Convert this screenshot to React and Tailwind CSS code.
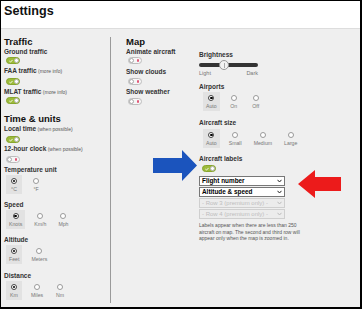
// Settings panel with annotation arrows
function Label({ children, note, className = "" }) {
  return (
    <div className={`h-[10px] leading-[10px] text-[6.5px] font-bold text-[#333] whitespace-nowrap ${className}`}>
      {children}
      {note && <span className="font-normal text-[5px] text-[#555]"> ({note})</span>}
    </div>
  );
}

function Heading({ children, className = "" }) {
  return (
    <div className={`h-[10px] leading-[10px] text-[9.5px] font-bold text-[#111] whitespace-nowrap ${className}`}>
      {children}
    </div>
  );
}

function Toggle({ on, className = "" }) {
  if (on) {
    return (
      <div className={`w-[14px] h-[7px] rounded-full bg-[#9dbb3a] border border-[#87a52e] flex items-center justify-between pl-[1.5px] ${className}`}>
        <svg width="4" height="4" viewBox="0 0 4 4">
          <path d="M0.4 2.1 L1.5 3.1 L3.6 0.9" stroke="#fff" strokeWidth="0.9" fill="none" />
        </svg>
        <div className="w-[5px] h-[5px] rounded-full bg-white border border-[#b5b5b5]" />
      </div>
    );
  }
  return (
    <div className={`w-[14px] h-[7px] rounded-full bg-[#f6f6f6] border border-[#bdbdbd] flex items-center justify-between pr-[2px] ${className}`}>
      <div className="w-[5px] h-[5px] rounded-full bg-white border border-[#a8a8a8]" />
      <div className="w-[2.5px] h-[2.5px] rounded-full bg-[#e05a78]" />
    </div>
  );
}

function RadioGroup({ options, selected = 0, className = "" }) {
  return (
    <div className={`flex gap-[6px] ${className}`}>
      {options.map((o, i) => (
        <div
          key={o}
          className={`h-[19px] min-w-[16px] px-[3px] pt-[3px] flex flex-col items-center ${i === selected ? "bg-[#e2e2e2]" : ""}`}
        >
          <div
            className={`w-[6px] h-[6px] rounded-full bg-white border flex items-center justify-center ${i === selected ? "border-[#444]" : "border-[#999]"}`}
          >
            {i === selected && <div className="w-[2.5px] h-[2.5px] rounded-full bg-black" />}
          </div>
          <div className="mt-[2px] text-[5.2px] leading-[7px] text-[#777] whitespace-nowrap">{o}</div>
        </div>
      ))}
    </div>
  );
}

function Select({ children, disabled }) {
  return (
    <div
      className={`h-[10px] w-[86px] mt-[1px] border flex items-center justify-between pl-[2px] pr-[2px] whitespace-nowrap ${disabled ? "border-[#cfcfcf] bg-[#ececec] text-[#bdbdbd] text-[6px]" : "border-[#777] bg-white text-black font-bold text-[6.4px]"}`}
    >
      <span className="leading-[8px]">{children}</span>
      <svg width="5" height="4" viewBox="0 0 5 4">
        <path d="M0.5 0.8 L2.5 3 L4.5 0.8" stroke={disabled ? "#bbb" : "#222"} strokeWidth="1" fill="none" />
      </svg>
    </div>
  );
}

export default function App() {
  return (
    <div className="relative w-[362px] h-[309px] border-l border-t border-r-2 border-b-2 border-black bg-[#efefef] overflow-hidden font-['Liberation_Sans',Arial,sans-serif]">
      {/* header */}
      <div className="h-[28px] bg-white border-b border-[#dddddd] pl-[3px] pt-[4px]">
        <h1 className="text-[12.6px] leading-none font-bold text-[#111]">Settings</h1>
      </div>

      <div className="flex pt-[8px]">
        {/* ===== left column ===== */}
        <div className="w-[110px] border-r border-[#9a9a9a] pl-[3px] pb-[3px]">
          <Heading>Traffic</Heading>
          <Label>Ground traffic</Label>
          <Toggle on className="ml-[2px]" />
          <Label note="more info" className="mt-[2px]">FAA traffic</Label>
          <Toggle on className="ml-[2px] mt-[2px]" />
          <Label note="more info" className="mt-[2px]">MLAT traffic</Label>
          <Toggle on className="ml-[2px]" />

          <Heading className="mt-[10px]">Time &amp; units</Heading>
          <Label note="when possible">Local time</Label>
          <Toggle on className="ml-[2px] mt-[2px]" />
          <Label note="when possible" className="mt-[1px]">12-hour clock</Label>
          <Toggle className="ml-[2px] mt-[2px]" />
          <Label className="mt-[2px]">Temperature unit</Label>
          <RadioGroup options={["°C", "°F"]} className="ml-[2px]" />
          <Label className="mt-[6px]">Speed</Label>
          <RadioGroup options={["Knots", "Km/h", "Mph"]} className="ml-[2px]" />
          <Label className="mt-[6px]">Altitude</Label>
          <RadioGroup options={["Feet", "Meters"]} className="ml-[2px]" />
          <Label className="mt-[7px]">Distance</Label>
          <RadioGroup options={["Km", "Miles", "Nm"]} className="ml-[2px]" />
        </div>

        {/* ===== map column ===== */}
        <div className="w-[88px] pl-[15px]">
          <Heading>Map</Heading>
          <Label>Animate aircraft</Label>
          <Toggle className="ml-[2px]" />
          <Label className="mt-[3px]">Show clouds</Label>
          <Toggle className="ml-[2px] mt-[1px]" />
          <Label className="mt-[2px]">Show weather</Label>
          <Toggle className="ml-[2px] mt-[1px]" />
        </div>

        {/* ===== display column ===== */}
        <div className="flex-1">
          <Label className="mt-[13px]">Brightness</Label>
          <div className="relative w-[59px] h-[10px] flex items-center">
            <div className="w-full h-[4px] rounded-full bg-[#333]" />
            <div className="absolute left-[20px] top-0 w-[10px] h-[10px] rounded-full bg-[#f3f3f3] border border-[#999] flex items-center justify-center">
              <div className="w-[1px] h-[5px] bg-[#aaa]" />
            </div>
          </div>
          <div className="w-[59px] flex justify-between text-[5.5px] leading-[6px] text-[#777]">
            <span>Light</span>
            <span>Dark</span>
          </div>
          <Label className="mt-[6px]">Airports</Label>
          <RadioGroup options={["Auto", "On", "Off"]} className="ml-[4px]" />
          <Label className="mt-[7px]">Aircraft size</Label>
          <RadioGroup options={["Auto", "Small", "Medium", "Large"]} className="ml-[4px] mt-[1px]" />
          <Label className="mt-[6px]">Aircraft labels</Label>
          <Toggle on className="ml-[3px] mt-[1px]" />
          <div className="mt-[4px]">
            <Select>Flight number</Select>
            <Select>Altitude &amp; speed</Select>
            <Select disabled>- Row 3 (premium only) -</Select>
            <Select disabled>- Row 4 (premium only) -</Select>
          </div>
          <p className="mt-[3px] text-[5px] leading-[6.5px] text-[#555] whitespace-nowrap">
            Labels appear when there are less than 250
            <br />
            aircraft on map. The second and third row will
            <br />
            appear only when the map is zoomed in.
          </p>
        </div>
      </div>

      {/* annotation arrows */}
      <svg className="absolute left-[-1px] top-[-1px] pointer-events-none" width="362" height="309">
        <polygon points="153,158 182,158 182,150 197,165.5 182,181 182,173 153,173" fill="#1b54bd" />
        <polygon points="341,177 315,177 315,170 298,184 315,198 315,191 341,191" fill="#ec1b1b" />
      </svg>
    </div>
  );
}
